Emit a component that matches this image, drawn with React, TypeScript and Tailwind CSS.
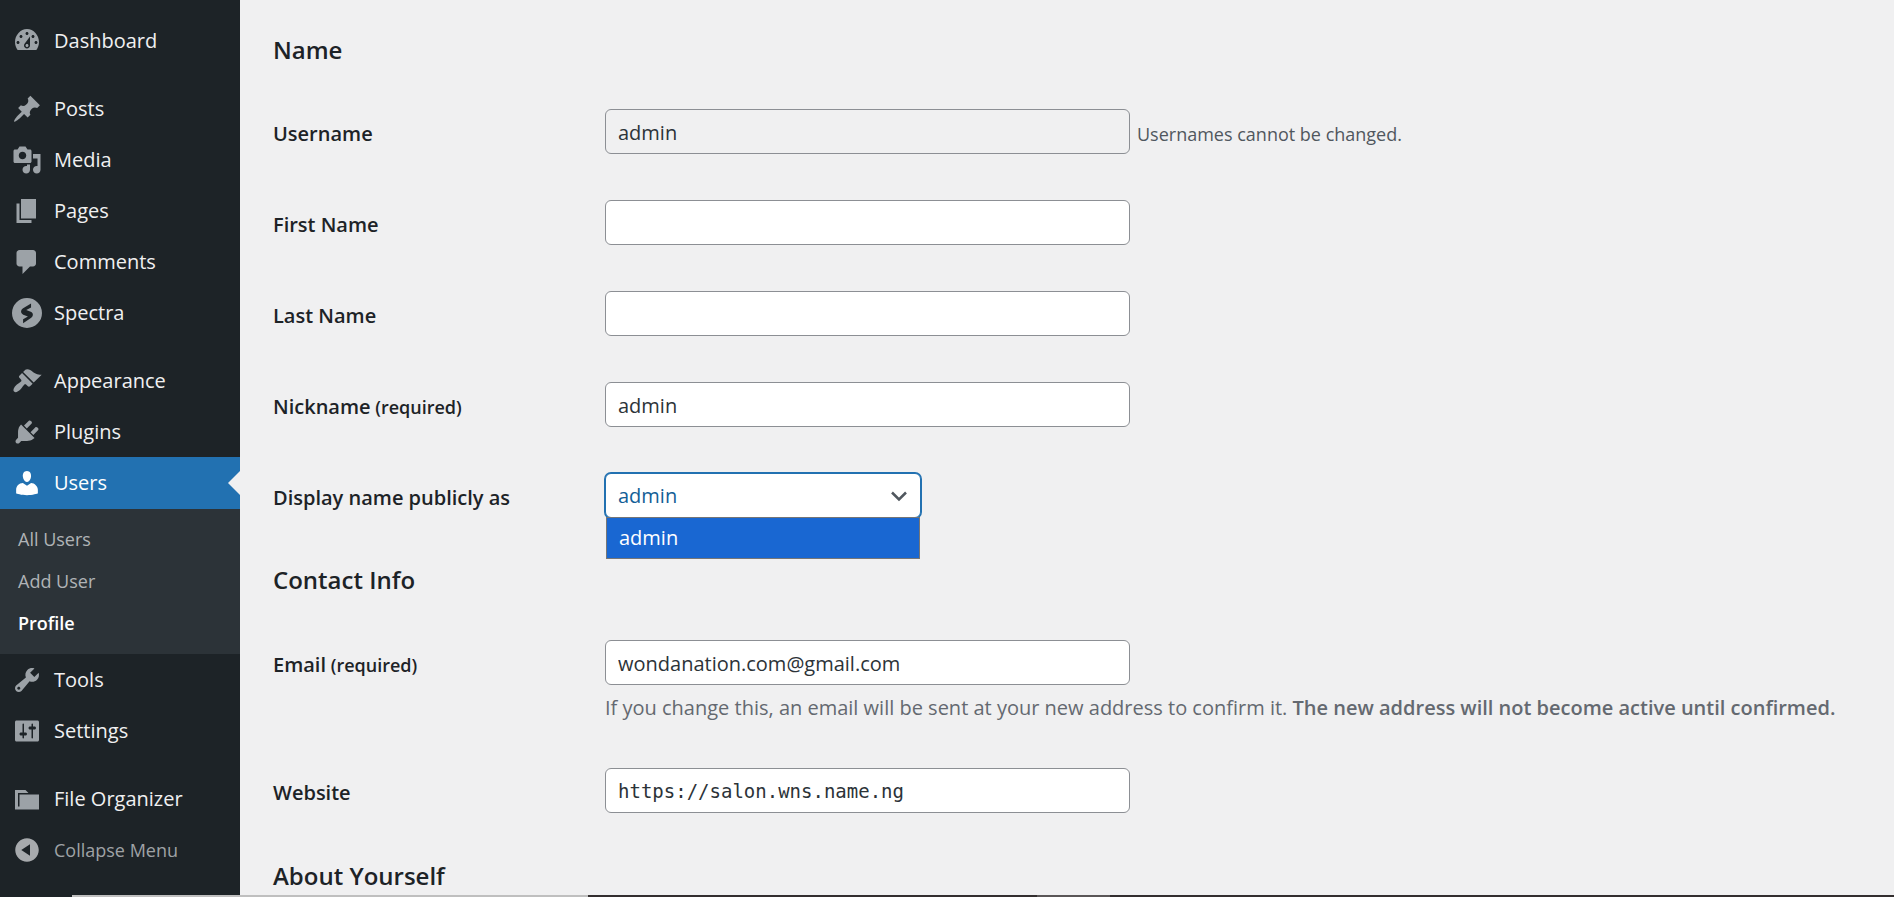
import { useState } from "react";
import type { ReactNode } from "react";

type MenuEntry = { label: string; path: string; active?: boolean; gap?: boolean };

const icons = {
  dashboard:
    "M3.76 16h12.48c1.11-1.5 1.76-3.3 1.76-5.3 0-4.6-3.6-8.7-8-8.7s-8 4.1-8 8.7c0 2 .65 3.8 1.76 5.3zM10 4c.55 0 1 .45 1 1s-.45 1-1 1-1-.45-1-1 .45-1 1-1zM6 6c.55 0 1 .45 1 1s-.45 1-1 1-1-.45-1-1 .45-1 1-1zm8 0c.55 0 1 .45 1 1s-.45 1-1 1-1-.45-1-1 .45-1 1-1zm-5.37 5.55L12 7v6c0 1.1-.9 2-2 2s-2-.9-2-2c0-.57.24-1.08.63-1.45zM4 10c.55 0 1 .45 1 1s-.45 1-1 1-1-.45-1-1 .45-1 1-1zm12 0c.55 0 1 .45 1 1s-.45 1-1 1-1-.45-1-1 .45-1 1-1zm-5 3c0-.55-.45-1-1-1s-1 .45-1 1 .45 1 1 1 1-.45 1-1z",
  posts:
    "M10.44 3.02l1.82-1.82 6.36 6.35-1.83 1.82c-1.05-.68-2.48-.57-3.41.36l-.75.75c-.92.93-1.04 2.35-.35 3.41l-1.83 1.82-2.41-2.41-2.8 2.79c-.42.42-3.38 2.71-3.8 2.29s1.86-3.39 2.28-3.81l2.79-2.79L4.1 9.36l1.83-1.82c1.05.69 2.48.57 3.4-.36l.75-.75c.93-.92 1.05-2.35.36-3.41z",
  media:
    "M13 11V4c0-.55-.45-1-1-1h-1.67L9 1H5L3.67 3H2c-.55 0-1 .45-1 1v7c0 .55.45 1 1 1h10c.55 0 1-.45 1-1zM7 4.5c1.38 0 2.5 1.12 2.5 2.5S8.38 9.5 7 9.5 4.5 8.38 4.5 7 5.62 4.5 7 4.5zM14 6h5v10.5c0 1.38-1.12 2.5-2.5 2.5S14 17.88 14 16.5s1.12-2.5 2.5-2.5c.17 0 .34.02.5.05V9h-3V6zm-4 8.05V13h2v3.5c0 1.38-1.12 2.5-2.5 2.5S7 17.88 7 16.5 8.12 14 9.5 14c.17 0 .34.02.5.05z",
  pages: "M6 15V2h10v13H6zm-1 1h8v2H3V5h2v11z",
  comments: "M5 2h9c1.1 0 2 .9 2 2v7c0 1.1-.9 2-2 2h-2l-5 5v-5H5c-1.1 0-2-.9-2-2V4c0-1.1.9-2 2-2z",
  spectra:
    "M10 0a10 10 0 1 0 0 20 10 10 0 1 0 0-20zM12.7 3.6v2.7L9.5 8l3 1.2c1.9.8 1.9 3 .1 4.2L7.4 16.9v-2.7l3.2-1.8-3.1-1.3c-1.9-.9-1.9-3-.1-4.2z",
  appearance:
    "M14.48 11.06L7.41 3.99l1.5-1.5c.5-.56 2.3-.47 3.51.32 1.21.8 1.43 1.28 2.91 2.1 1.18.64 2.45 1.26 4.45.85zm-.71.71L6.7 4.7 4.93 6.47c-.39.39-.39 1.02 0 1.41l1.06 1.06c.39.39.39 1.03 0 1.42-.6.6-1.43 1.11-2.21 1.69-.35.26-.7.53-1.01.84C1.43 14.23.4 16.08 1.4 17.07c.99 1 2.84-.03 4.18-1.36.31-.31.58-.66.85-1.02.57-.78 1.08-1.61 1.69-2.21.39-.39 1.02-.39 1.41 0l1.06 1.06c.39.39 1.02.39 1.41 0z",
  plugins:
    "M13.11 4.36L9.87 7.6 8 5.73l3.24-3.24c.35-.34 1.05-.2 1.56.32.52.51.66 1.21.31 1.55zm-8 1.77l.91-1.12 9.01 9.01-1.19.84c-.71.71-2.63 1.16-3.82 1.16H6.14L4.9 17.26c-.59.59-1.54.59-2.12 0-.59-.58-.59-1.53 0-2.12l1.24-1.24v-3.88c0-1.13.4-3.19 1.09-3.89zm7.26 3.97l3.24-3.24c.34-.35 1.04-.21 1.55.31.52.51.66 1.21.31 1.55l-3.24 3.25z",
  users:
    "M10 9.25c-2.27 0-2.73-3.44-2.73-3.44C7 4.02 7.82 2 9.97 2c2.16 0 2.98 2.02 2.71 3.81 0 0-.41 3.44-2.68 3.44zm0 2.57L12.72 10c2.39 0 4.52 2.33 4.52 4.53v2.49s-3.65 1.13-7.24 1.13c-3.65 0-7.24-1.13-7.24-1.13v-2.49c0-2.25 1.94-4.48 4.47-4.48z",
  tools:
    "M16.68 9.77c-1.34 1.34-3.3 1.67-4.95.99l-5.41 6.52c-.99.99-2.59.99-3.58 0s-.99-2.59 0-3.57l6.52-5.42c-.68-1.65-.35-3.61.99-4.95 1.28-1.28 3.12-1.62 4.72-1.06l-2.89 2.89 2.82 2.82 2.86-2.87c.53 1.58.18 3.39-1.08 4.65zM3.81 16.21c.4.39 1.04.39 1.43 0 .4-.4.4-1.04 0-1.43-.39-.4-1.03-.4-1.43 0-.39.39-.39 1.03 0 1.43z",
  settings:
    "M18 16V4c0-.55-.45-1-1-1H3c-.55 0-1 .45-1 1v12c0 .55.45 1 1 1h14c.55 0 1-.45 1-1zM8 11h1c.55 0 1 .45 1 1s-.45 1-1 1H8v1.5c0 .28-.22.5-.5.5s-.5-.22-.5-.5V13H6c-.55 0-1-.45-1-1s.45-1 1-1h1V5.5c0-.28.22-.5.5-.5s.5.22.5.5V11zm5-2h-1c-.55 0-1-.45-1-1s.45-1 1-1h1V5.5c0-.28.22-.5.5-.5s.5.22.5.5V7h1c.55 0 1 .45 1 1s-.45 1-1 1h-1v5.5c0 .28-.22.5-.5.5s-.5-.22-.5-.5V9z",
  folder: "M5 7h13v10H2V4h7l2 2H4v9h1V7z",
  collapse:
    "M10 2.16c4.33 0 7.84 3.51 7.84 7.84s-3.51 7.84-7.84 7.84S2.16 14.33 2.16 10 5.71 2.16 10 2.16zm2 11.72V6.12L6.18 9.97z",
};

const upperMenu: MenuEntry[] = [
  { label: "Dashboard", path: icons.dashboard },
  { label: "Posts", path: icons.posts, gap: true },
  { label: "Media", path: icons.media },
  { label: "Pages", path: icons.pages },
  { label: "Comments", path: icons.comments },
  { label: "Spectra", path: icons.spectra },
  { label: "Appearance", path: icons.appearance, gap: true },
  { label: "Plugins", path: icons.plugins },
  { label: "Users", path: icons.users, active: true },
];

const lowerMenu: MenuEntry[] = [
  { label: "Tools", path: icons.tools },
  { label: "Settings", path: icons.settings },
  { label: "File Organizer", path: icons.folder, gap: true },
];

function MenuIcon({ path }: { path: string }) {
  return (
    <svg viewBox="0 0 20 20" className="size-[30px] shrink-0 fill-current" fillRule="evenodd" aria-hidden="true">
      <path d={path} />
    </svg>
  );
}

function MenuItem({ entry }: { entry: MenuEntry }) {
  return (
    <li className={entry.gap ? "mt-[17px]" : ""}>
      <a
        href="#"
        className={
          entry.active
            ? "relative flex h-[52px] items-center gap-3 bg-[#2271b1] pl-3 text-white"
            : "flex h-[51px] items-center gap-3 pl-3 text-[#9ca2a7]"
        }
      >
        <MenuIcon path={entry.path} />
        <span className={entry.active ? "text-white" : "text-[#f0f0f1]"}>{entry.label}</span>
        {entry.active && (
          <svg viewBox="0 0 12 24" className="absolute top-1/2 right-0 h-6 w-3 -translate-y-1/2 fill-[#f0f0f1]" aria-hidden="true">
            <path d="M12 0v24L0 12z" />
          </svg>
        )}
      </a>
    </li>
  );
}

function Sidebar() {
  return (
    <nav className="w-60 shrink-0 bg-[#1d2327] pt-[15px] text-xl" aria-label="Main menu">
      <ul>
        {upperMenu.map((entry) => (
          <MenuItem key={entry.label} entry={entry} />
        ))}
        <li>
          <ul className="bg-[#2c3338] pt-[9px] pb-[10px] text-lg text-[#b0b3b6]">
            {["All Users", "Add User", "Profile"].map((label) => (
              <li key={label}>
                <a
                  href="#"
                  className={
                    label === "Profile"
                      ? "flex h-[42px] items-center pl-[18px] font-semibold text-white"
                      : "flex h-[42px] items-center pl-[18px]"
                  }
                >
                  {label}
                </a>
              </li>
            ))}
          </ul>
        </li>
        {lowerMenu.map((entry) => (
          <MenuItem key={entry.label} entry={entry} />
        ))}
        <li>
          <button type="button" className="flex h-[51px] w-full items-center gap-3 pl-3 text-[#a7aaad]">
            <MenuIcon path={icons.collapse} />
            <span className="text-lg text-[#9fa2a5]">Collapse Menu</span>
          </button>
        </li>
      </ul>
    </nav>
  );
}

function Row({ id, label, required, children }: { id: string; label: string; required?: boolean; children: ReactNode }) {
  return (
    <div className="flex items-start">
      <label htmlFor={id} className="w-[332px] shrink-0 pt-[13px] text-xl leading-6 font-semibold text-[#1d2327]">
        {label}
        {required && <span className="text-lg leading-6"> (required)</span>}
      </label>
      <div className="min-w-0 flex-1">{children}</div>
    </div>
  );
}

const fieldBox = "h-[45px] w-[525px] max-w-full rounded-md border border-[#8c8f94] px-3 text-[#2c3338] outline-none";
const field = `${fieldBox} bg-white pt-[2px]`;

function Heading({ children }: { children: ReactNode }) {
  return <h2 className="text-2xl leading-8 font-semibold text-[#1d2327]">{children}</h2>;
}

function ProfileForm() {
  const [first, setFirst] = useState("");
  const [last, setLast] = useState("");
  const [nickname, setNickname] = useState("admin");
  const [email, setEmail] = useState("wondanation.com@gmail.com");
  const [site, setSite] = useState("https://salon.wns.name.ng");

  return (
    <form className="min-w-0 flex-1 pt-[34px] pl-[33px] text-xl">
      <Heading>Name</Heading>
      <div className="mt-[43px] flex flex-col gap-[46px]">
        <Row id="username" label="Username">
          <div className="flex items-center gap-[7px]">
            <input id="username" value="admin" disabled className={`${fieldBox} bg-[#f0f0f1] pt-[2px]`} />
            <span className="pt-1 text-lg text-[#50575e]">Usernames cannot be changed.</span>
          </div>
        </Row>
        <Row id="first" label="First Name">
          <input id="first" value={first} onChange={(e) => setFirst(e.target.value)} className={field} />
        </Row>
        <Row id="last" label="Last Name">
          <input id="last" value={last} onChange={(e) => setLast(e.target.value)} className={field} />
        </Row>
        <Row id="nickname" label="Nickname" required>
          <input id="nickname" value={nickname} onChange={(e) => setNickname(e.target.value)} className={field} />
        </Row>
        <Row id="display" label="Display name publicly as">
          <div className="relative w-[316px]">
            <select
              id="display"
              className="block h-[45px] w-full appearance-none rounded-md border border-[#2271b1] bg-white px-3 text-[#135e96] ring-1 ring-[#2271b1] outline-none"
            >
              <option>admin</option>
            </select>
            <svg
              viewBox="0 0 24 24"
              className="pointer-events-none absolute top-[11px] right-[10px] size-6 fill-none stroke-[#50575e]"
              strokeWidth="2.5"
              aria-hidden="true"
            >
              <path d="M5 8.5l7 7 7-7" />
            </svg>
            <div
              role="listbox"
              aria-label="Display name"
              className="absolute top-11 right-px left-px border border-[#767676] bg-[#1967d2] text-white"
            >
              <div role="option" aria-selected="true" className="flex h-10 items-center px-3">
                admin
              </div>
            </div>
          </div>
        </Row>
      </div>
      <div className="mt-[46px]">
        <Heading>Contact Info</Heading>
      </div>
      <div className="mt-[44px]">
        <Row id="email" label="Email" required>
          <input id="email" type="email" value={email} onChange={(e) => setEmail(e.target.value)} className={field} />
          <p className="mt-2 text-xl leading-[30px] text-[#646970]">
            If you change this, an email will be sent at your new address to confirm it.{" "}
            <strong className="font-semibold">The new address will not become active until confirmed.</strong>
          </p>
        </Row>
      </div>
      <div className="mt-[45px]">
        <Row id="site" label="Website">
          <input
            id="site"
            type="url"
            value={site}
            onChange={(e) => setSite(e.target.value)}
            className={`${fieldBox} bg-white font-['DejaVu_Sans_Mono',monospace] text-[19px]`}
          />
        </Row>
      </div>
      <div className="mt-[47px]">
        <Heading>About Yourself</Heading>
      </div>
    </form>
  );
}

export default function App() {
  return (
    <div className="flex h-screen flex-col overflow-hidden bg-[#1d2327] font-['Open_Sans',sans-serif]">
      <div className="flex min-h-0 flex-1 overflow-hidden bg-[#f0f0f1]">
        <Sidebar />
        <ProfileForm />
      </div>
      <div className="flex h-[2px] shrink-0" aria-hidden="true">
        <div className="w-[72px] bg-[#1d2327]" />
        <div className="w-[516px] bg-[#bfbfbf]" />
        <div className="w-[449px] bg-[#332e2f]" />
        <div className="w-[73px] bg-[#5a5657]" />
        <div className="flex-1 bg-[#332e2f]" />
      </div>
    </div>
  );
}
